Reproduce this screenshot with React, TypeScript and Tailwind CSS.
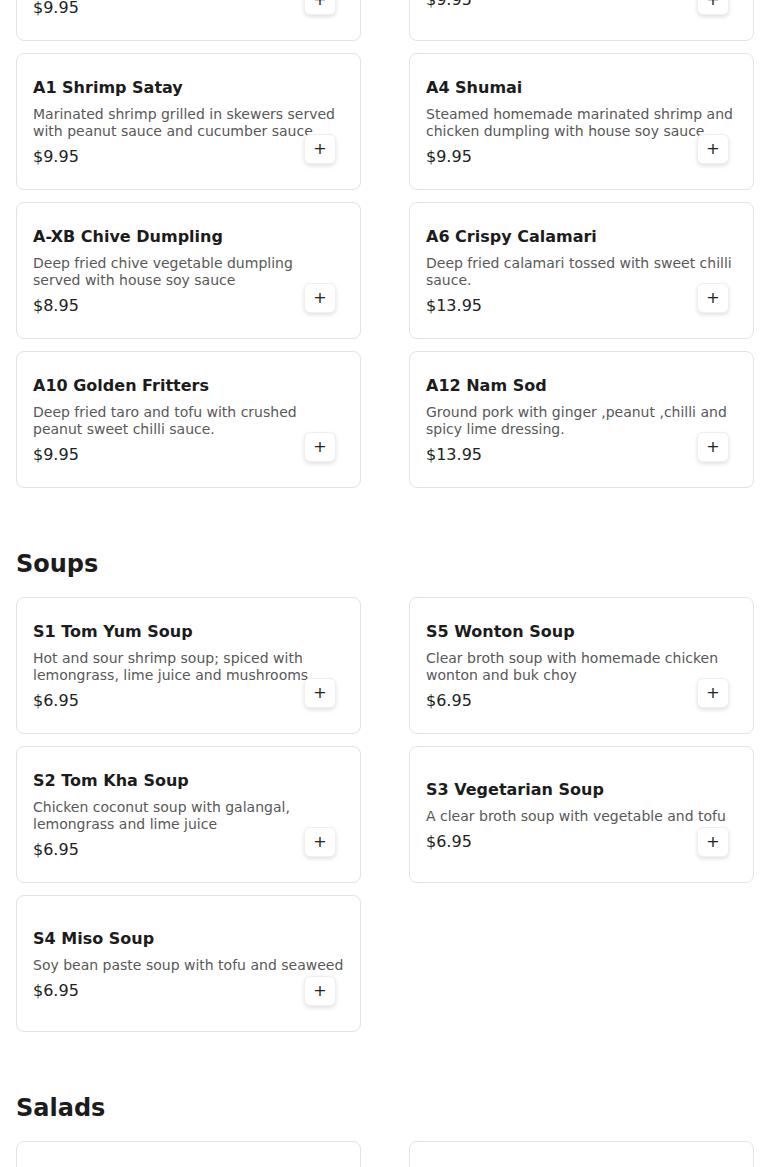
import React from "react";

type Item = { name: string; desc: string; price: string };

const appetizers: Item[] = [
  { name: "A3 Fresh Rolls", desc: "Fresh rice paper rolls with shrimp, lettuce and herbs served with peanut sauce", price: "$9.95" },
  { name: "A2 Spring Rolls", desc: "Crispy vegetable spring rolls", price: "$9.95" },
  { name: "A1 Shrimp Satay", desc: "Marinated shrimp grilled in skewers served with peanut sauce and cucumber sauce", price: "$9.95" },
  { name: "A4 Shumai", desc: "Steamed homemade marinated shrimp and chicken dumpling with house soy sauce", price: "$9.95" },
  { name: "A-XB Chive Dumpling", desc: "Deep fried chive vegetable dumpling served with house soy sauce", price: "$8.95" },
  { name: "A6 Crispy Calamari", desc: "Deep fried calamari tossed with sweet chilli sauce.", price: "$13.95" },
  { name: "A10 Golden Fritters", desc: "Deep fried taro and tofu with crushed peanut sweet chilli sauce.", price: "$9.95" },
  { name: "A12 Nam Sod", desc: "Ground pork with ginger ,peanut ,chilli and spicy lime dressing.", price: "$13.95" },
];

const soups: Item[] = [
  { name: "S1 Tom Yum Soup", desc: "Hot and sour shrimp soup; spiced with lemongrass, lime juice and mushrooms", price: "$6.95" },
  { name: "S5 Wonton Soup", desc: "Clear broth soup with homemade chicken wonton and buk choy", price: "$6.95" },
  { name: "S2 Tom Kha Soup", desc: "Chicken coconut soup with galangal, lemongrass and lime juice", price: "$6.95" },
  { name: "S3 Vegetarian Soup", desc: "A clear broth soup with vegetable and tofu", price: "$6.95" },
  { name: "S4 Miso Soup", desc: "Soy bean paste soup with tofu and seaweed", price: "$6.95" },
];

const salads: Item[] = [
  { name: "SA1 Papaya Salad", desc: "Shredded green papaya with tomato, peanut and lime dressing", price: "$10.95" },
  { name: "SA2 Larb Gai", desc: "Minced chicken with herbs and spicy lime dressing", price: "$11.95" },
];

function Card({ item }: { item: Item }) {
  return (
    <div className="relative h-[137px] rounded-lg border border-[#e3e3e3] bg-white px-4 flex flex-col justify-center">
      <div className="text-base leading-5 font-bold text-[#1c1c1c] mb-2 mt-px">{item.name}</div>
      <div className="text-sm leading-[17px] text-[#585858]">{item.desc}</div>
      <div className="mt-2 text-base leading-[18px] text-[#222222]">{item.price}</div>
      <button className="absolute right-6 bottom-[25px] w-8 h-[30px] rounded-md bg-white border border-[#efefef] shadow-[0_2px_4px_rgba(0,0,0,0.12)] flex items-center justify-center text-base leading-none text-[#222222]">
        +
      </button>
    </div>
  );
}

function Grid({ items }: { items: Item[] }) {
  return (
    <div className="grid grid-cols-2 gap-x-12 gap-y-3">
      {items.map((it) => (
        <Card key={it.name} item={it} />
      ))}
    </div>
  );
}

function Section({ title, items }: { title: string; items: Item[] }) {
  return (
    <section className="mt-[60px]">
      <h2 className="text-2xl leading-8 font-bold text-[#1c1c1c] mb-[17px]">{title}</h2>
      <Grid items={items} />
    </section>
  );
}

export default function App() {
  return (
    <div className="h-[1167px] overflow-hidden bg-white font-['DejaVu_Sans',sans-serif]">
      <div className="px-4 -mt-[96px]">
        <Grid items={appetizers} />
        <Section title="Soups" items={soups} />
        <Section title="Salads" items={salads} />
      </div>
    </div>
  );
}
